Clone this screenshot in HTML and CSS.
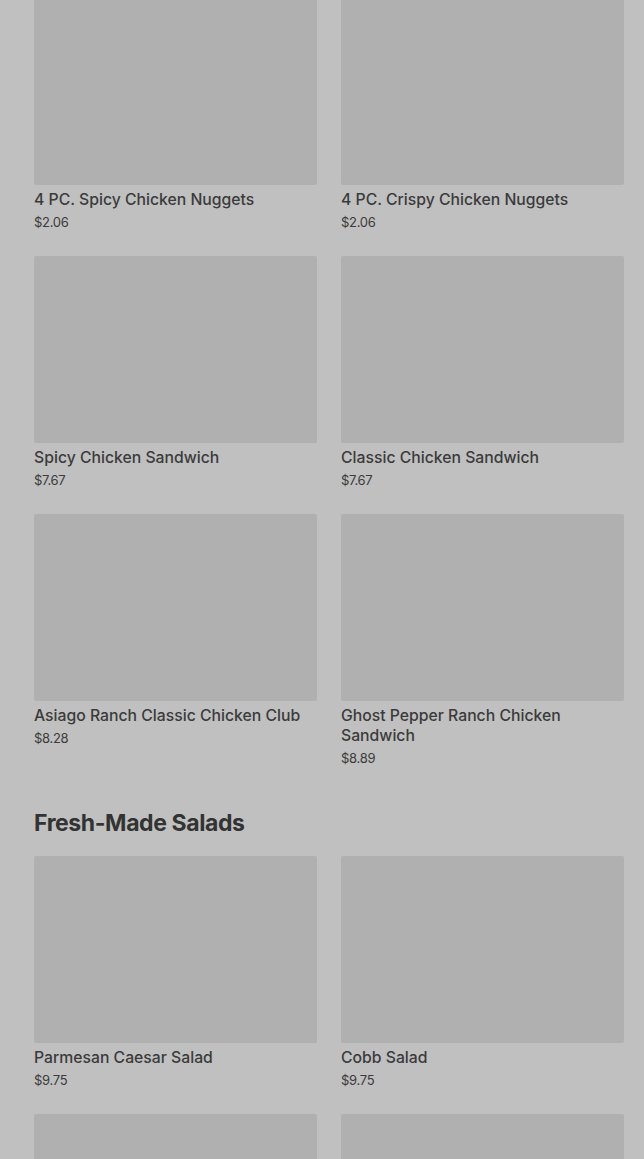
FILE: index.html
```html
<!DOCTYPE html>
<html lang="en">
<head>
<meta charset="utf-8">
<link rel="stylesheet" href="styles.css">
</head>
<body>
<main class="menu">
  <section class="section">
    <div class="grid first">
      <div class="item"><div class="thumb"></div><div class="name">4 PC. Spicy Chicken Nuggets</div><div class="price">$2.06</div></div>
      <div class="item"><div class="thumb"></div><div class="name">4 PC. Crispy Chicken Nuggets</div><div class="price">$2.06</div></div>
      <div class="item"><div class="thumb"></div><div class="name">Spicy Chicken Sandwich</div><div class="price">$7.67</div></div>
      <div class="item"><div class="thumb"></div><div class="name">Classic Chicken Sandwich</div><div class="price">$7.67</div></div>
      <div class="item"><div class="thumb"></div><div class="name">Asiago Ranch Classic Chicken Club</div><div class="price">$8.28</div></div>
      <div class="item"><div class="thumb"></div><div class="name">Ghost Pepper Ranch Chicken Sandwich</div><div class="price">$8.89</div></div>
    </div>
  </section>
  <section class="section">
    <h2 class="heading">Fresh-Made Salads</h2>
    <div class="grid">
      <div class="item"><div class="thumb"></div><div class="name">Parmesan Caesar Salad</div><div class="price">$9.75</div></div>
      <div class="item"><div class="thumb"></div><div class="name">Cobb Salad</div><div class="price">$9.75</div></div>
      <div class="item"><div class="thumb"></div></div>
      <div class="item"><div class="thumb"></div></div>
    </div>
  </section>
</main>
</body>
</html>
```

FILE: styles.css
```css
html, body {
  margin: 0;
  padding: 0;
  background: #c0c0c0;
}
body {
  font-family: Inter, "Noto Sans", sans-serif;
  color: #3b3b3b;
  overflow: hidden;
}
.menu {
  padding: 0 20px 0 34px;
}
.section {
  margin-bottom: 39px;
}
.grid {
  display: grid;
  grid-template-columns: 283px 283px;
  column-gap: 24px;
  row-gap: 24px;
  align-items: start;
}
.grid.first {
  margin-top: -2px;
}
.thumb {
  height: 187px;
  background: #b0b0b0;
  border-radius: 2px;
}
.name {
  margin-top: 5px;
  font-size: 15.75px;
  line-height: 20px;
  font-weight: 500;
}
.price {
  margin-top: 2px;
  font-size: 13px;
  line-height: 20px;
  font-weight: 400;
  letter-spacing: -0.3px;
}
.heading {
  margin: 0 0 17px;
  font-size: 23px;
  line-height: 32px;
  font-weight: 700;
  letter-spacing: -0.4px;
  color: #333;
}
```
